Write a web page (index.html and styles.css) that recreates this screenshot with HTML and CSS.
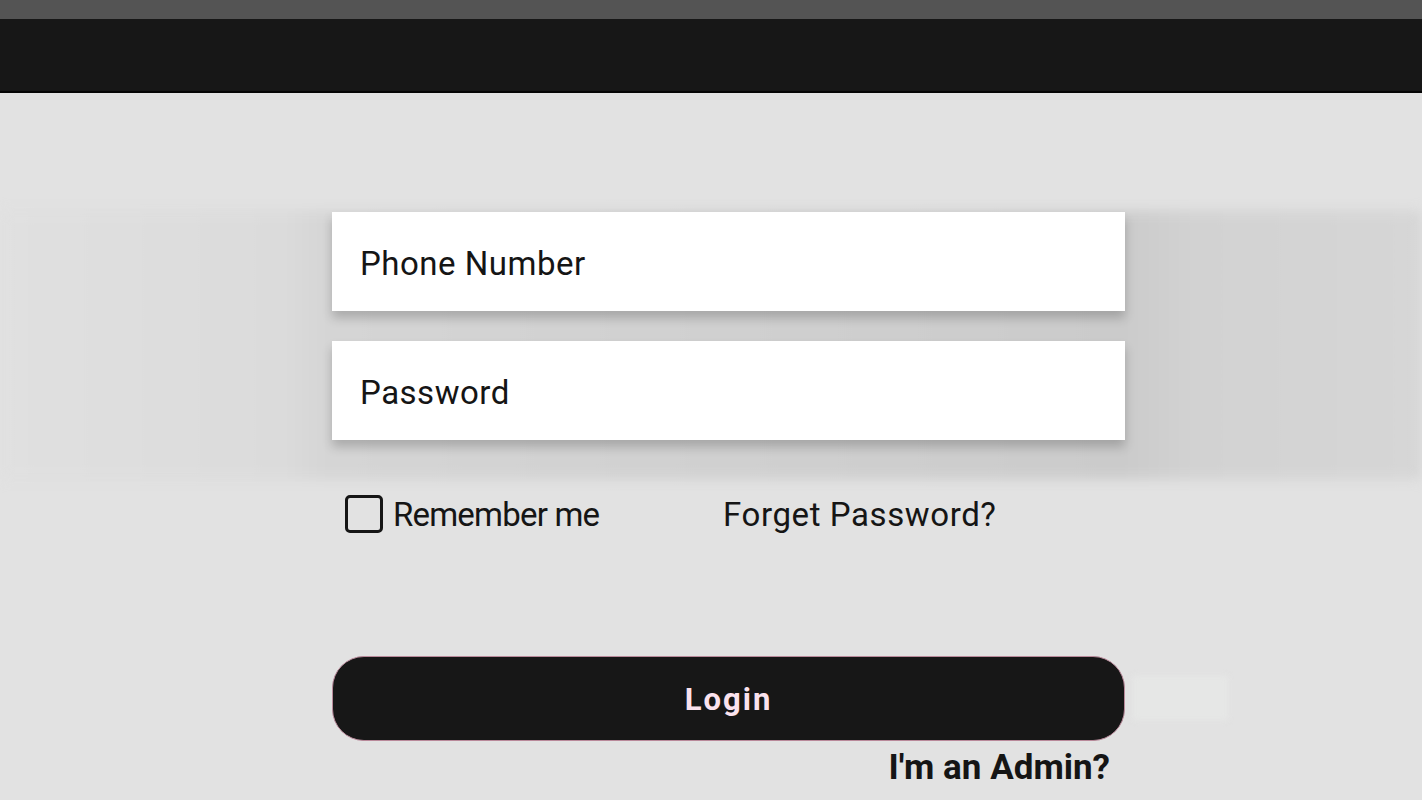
FILE: index.html
```html
<html>
<head>
<link rel="stylesheet" href="styles.css">
</head>
<body>
<div class="statusbar"></div>
<div class="toolbar"></div>
<div class="page">
<div class="fields">
<form class="login-form" onsubmit="return false;">
<input class="field" type="text" name="phone" placeholder="Phone Number">
<input class="field" type="password" name="pwd" placeholder="Password">
</form>
</div>
<div class="options">
<label class="remember"><span class="box"></span>Remember me</label>
<a class="forget" href="#">Forget Password?</a>
</div>
<div class="actions">
<button class="login-btn" type="button">Login</button>
<a class="admin" href="#">I'm an Admin?</a>
</div>
</div>
</body>
</html>
```

FILE: styles.css
```css
body {
margin: 0;
background-color: #e2e2e2;
font-family: Roboto, "Liberation Sans", sans-serif;
color: #151515;
overflow: hidden;
}

.statusbar {
height: 19px;
background-color: #545454;
}

.toolbar {
height: 72px;
background-color: #171717;
border-bottom: 2px solid #050505;
}

.page {
padding-top: 118px;
}

.fields {
position: relative;
padding: 1px 0;
}

.fields::before {
content: "";
position: absolute;
left: 0; right: 0; top: 0; bottom: -22px;
background: linear-gradient(to right, #e0e0e0 0%, #dbdbdb 20%, #d5d5d5 23%, #cbcbcb 79%, #d2d2d2 84%, #d6d6d6 100%);
filter: blur(6px);
}

.login-form {
position: relative;
display: flex;
flex-direction: column;
gap: 30px;
width: 793px;
margin-left: 332px;
}

.field {
height: 99px;
border: none;
background-color: white;
padding: 4px 28px 0;
font-family: Roboto, "Liberation Sans", sans-serif;
font-size: 33px;
letter-spacing: 0.5px;
color: #151515;
outline: none;
box-shadow: 0 7px 10px rgba(0,0,0,0.2);
}

.field::placeholder {
color: #151515;
}

.options {
display: flex;
align-items: center;
margin: 38px 0 0 345px;
height: 38px;
font-size: 33px;
}

.remember {
display: flex;
align-items: center;
width: 378px;
letter-spacing: -0.8px;
}

.box {
width: 32px;
height: 32px;
border: 3px solid #151515;
border-radius: 5px;
margin-right: 10px;
}

.forget {
color: #151515;
text-decoration: none;
letter-spacing: 0.6px;
}

.actions {
display: flex;
flex-direction: column;
align-items: flex-end;
width: 793px;
margin: 123px 0 0 332px;
}

.login-btn {
position: relative;
width: 793px;
height: 85px;
border: 1px solid #b9899a;
border-radius: 32px;
background-color: #171717;
color: #fbe2ee;
font-family: Roboto, "Liberation Sans", sans-serif;
font-size: 31px;
font-weight: bold;
letter-spacing: 2px;
padding-top: 3px;
cursor: pointer;
}

.login-btn::after {
content: "";
position: absolute;
left: 800px; top: 19px;
width: 95px;
height: 44px;
background-color: #e6e7e6;
filter: blur(3px);
}

.admin {
margin: 6px 15px 0 0;
color: #151515;
font-size: 35px;
font-weight: bold;
text-decoration: none;
}
```
